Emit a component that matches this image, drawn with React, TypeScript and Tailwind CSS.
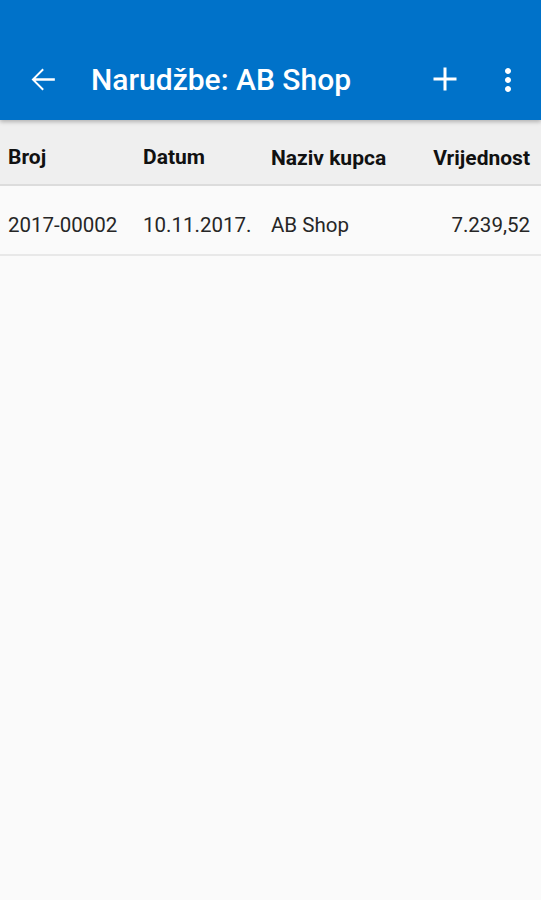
import React from "react";

export default function App() {
  return (
    <div className="w-[541px] h-[900px] bg-[#fafafa] flex flex-col" style={{ fontFamily: "Roboto, 'Noto Sans', sans-serif" }}>
      <div className="h-[120px] bg-[#0072c9] flex flex-col shadow-[0_2px_4px_rgba(0,0,0,0.25)] relative z-10">
        <div className="h-[40px]" />
        <div className="flex-1 flex items-center">
          <div className="w-[84px] flex items-center pl-[24px] pb-[2px]">
            <svg width="37" height="37" viewBox="0 0 24 24" fill="white">
              <path d="M20 11.2H7.5l5.4-5.4L12 4.9l-7.1 7.1L12 19.1l0.9-0.9-5.4-5.4H20v-1.6z" />
            </svg>
          </div>
          <div className="pl-[7px] text-white text-[30px] font-medium flex-1 leading-none">Narudžbe: AB Shop</div>
          <div className="flex items-center">
            <svg width="40" height="40" viewBox="0 0 24 24" fill="white" className="mb-[2px]">
              <path d="M18.9 12.9h-6v6h-1.8v-6h-6v-1.8h6v-6h1.8v6h6v1.8z" />
            </svg>
            <div className="w-[25px]" />
            <svg width="36" height="36" viewBox="0 0 24 24" fill="white">
              <path d="M12 8c1.1 0 2-.9 2-2s-.9-2-2-2-2 .9-2 2 .9 2 2 2zm0 2c-1.1 0-2 .9-2 2s.9 2 2 2 2-.9 2-2-.9-2-2-2zm0 6c-1.1 0-2 .9-2 2s.9 2 2 2 2-.9 2-2-.9-2-2-2z" />
            </svg>
            <div className="w-[15px]" />
          </div>
        </div>
      </div>
      <div className="h-[66px] bg-[#efefef] border-b-2 border-[#dcdcdc] flex items-center text-[21px] font-bold text-[#111] pt-[11px]">
        <div className="w-[135px] pl-[8px]">Broj</div>
        <div className="w-[128px] pl-[8px]">Datum</div>
        <div className="flex-1 pl-[8px] pt-[3px]">Naziv kupca</div>
        <div className="pr-[11px] pt-[3px]">Vrijednost</div>
      </div>
      <div className="h-[70px] border-b-2 border-[#e8e8e8] flex items-center text-[20.5px] text-[#262626] pt-[11px]">
        <div className="w-[135px] pl-[8px]">2017-00002</div>
        <div className="w-[128px] pl-[8px]">10.11.2017.</div>
        <div className="flex-1 pl-[8px]">AB Shop</div>
        <div className="pr-[11px]">7.239,52</div>
      </div>
    </div>
  );
}
